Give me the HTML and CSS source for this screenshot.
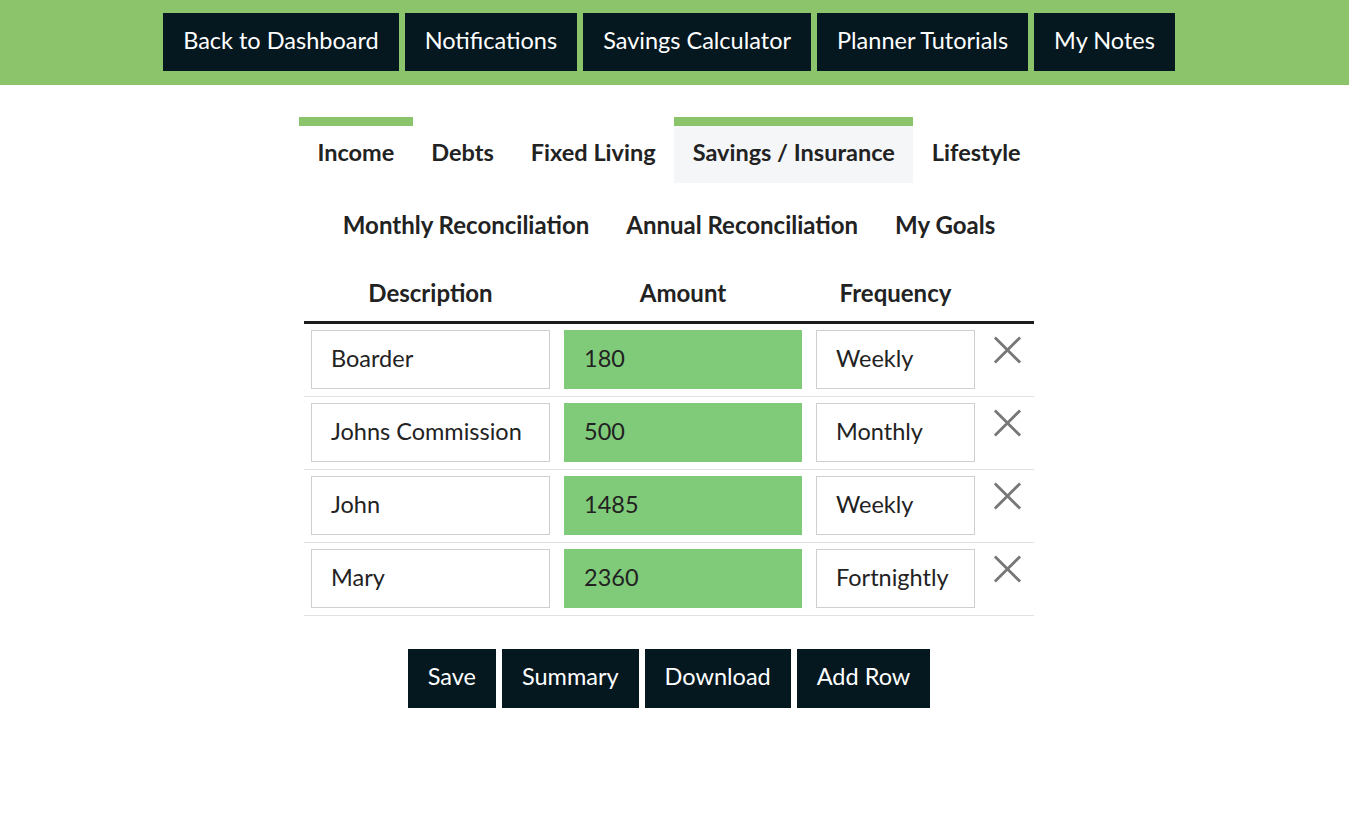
FILE: index.html
```html
<!DOCTYPE html>
<html lang="en">
<head>
<meta charset="utf-8">
<title>Budget Planner</title>
<link rel="stylesheet" href="styles.css">
</head>
<body>
<header class="topbar">
  <a class="nav-btn" href="#">Back to Dashboard</a>
  <a class="nav-btn" href="#">Notifications</a>
  <a class="nav-btn" href="#">Savings Calculator</a>
  <a class="nav-btn" href="#">Planner Tutorials</a>
  <a class="nav-btn" href="#">My Notes</a>
</header>
<main class="page">
  <nav class="tabs tabs-first">
    <a class="tab tab-done" href="#">Income</a>
    <a class="tab" href="#">Debts</a>
    <a class="tab" href="#">Fixed Living</a>
    <a class="tab tab-done tab-current" href="#">Savings / Insurance</a>
    <a class="tab" href="#">Lifestyle</a>
  </nav>
  <nav class="tabs tabs-second">
    <a class="tab" href="#">Monthly Reconciliation</a>
    <a class="tab" href="#">Annual Reconciliation</a>
    <a class="tab" href="#">My Goals</a>
  </nav>
  <table class="grid">
    <colgroup>
      <col class="c-desc"><col class="c-amt"><col class="c-freq"><col class="c-del">
    </colgroup>
    <thead>
      <tr><th>Description</th><th>Amount</th><th>Frequency</th><th></th></tr>
    </thead>
    <tbody>
      <tr>
        <td><div class="field">Boarder</div></td>
        <td><div class="field field-amt">180</div></td>
        <td><div class="field">Weekly</div></td>
        <td class="del"><svg class="x" viewBox="0 0 30 30"><path d="M1.5 1.5L28.5 28.5M28.5 1.5L1.5 28.5"/></svg></td>
      </tr>
      <tr>
        <td><div class="field">Johns Commission</div></td>
        <td><div class="field field-amt">500</div></td>
        <td><div class="field">Monthly</div></td>
        <td class="del"><svg class="x" viewBox="0 0 30 30"><path d="M1.5 1.5L28.5 28.5M28.5 1.5L1.5 28.5"/></svg></td>
      </tr>
      <tr>
        <td><div class="field">John</div></td>
        <td><div class="field field-amt">1485</div></td>
        <td><div class="field">Weekly</div></td>
        <td class="del"><svg class="x" viewBox="0 0 30 30"><path d="M1.5 1.5L28.5 28.5M28.5 1.5L1.5 28.5"/></svg></td>
      </tr>
      <tr>
        <td><div class="field">Mary</div></td>
        <td><div class="field field-amt">2360</div></td>
        <td><div class="field">Fortnightly</div></td>
        <td class="del"><svg class="x" viewBox="0 0 30 30"><path d="M1.5 1.5L28.5 28.5M28.5 1.5L1.5 28.5"/></svg></td>
      </tr>
    </tbody>
  </table>
  <div class="actions">
    <a class="nav-btn act-btn" href="#">Save</a>
    <a class="nav-btn act-btn" href="#">Summary</a>
    <a class="nav-btn act-btn" href="#">Download</a>
    <a class="nav-btn act-btn" href="#">Add Row</a>
  </div>
</main>
</body>
</html>
```

FILE: styles.css
```css
* { box-sizing: border-box; }

body {
  margin: 0;
  font-family: Lato, "Open Sans", sans-serif;
  color: #222;
  background: #fff;
}

a { text-decoration: none; }

.topbar {
  background: #8bc46a;
  display: flex;
  justify-content: center;
  gap: 6px;
  padding: 13px 11px 14px 0;
}

.nav-btn {
  display: flex;
  align-items: center;
  height: 58px;
  padding: 0 20px 5px;
  background: #051820;
  color: #fff;
  font-size: 23.5px;
}

.page {
  padding-right: 11px;
  display: flex;
  flex-direction: column;
  align-items: center;
}

.tabs {
  display: flex;
  justify-content: center;
}

.tabs-first { margin-top: 32px; }
.tabs-second { margin-top: 6px; }

.tab {
  display: flex;
  align-items: center;
  height: 66px;
  padding: 0 18.5px 5px;
  border-top: 9px solid transparent;
  color: #222;
  font-weight: 700;
  font-size: 24px;
}

.tabs-first .tab { font-size: 23.5px; }

.tab-done { border-top-color: #8bc46a; }
.tab-current { background: #f5f6f8; }

.grid {
  margin-top: 9px;
  width: 730px;
  border-collapse: collapse;
  table-layout: fixed;
}

.c-desc { width: 253px; }
.c-amt { width: 252px; }
.c-freq { width: 173px; }
.c-del { width: 52px; }

.grid th {
  height: 58px;
  font-size: 24px;
  font-weight: 700;
  text-align: center;
  border-bottom: 3px solid #1c1c1c;
  padding: 0;
}

.grid td {
  padding: 6px 7px 7px;
  border-bottom: 1px solid #e2e2e2;
}

.field {
  height: 59px;
  border: 1px solid #cfcfcf;
  padding: 0 19px 2px;
  display: flex;
  align-items: center;
  font-size: 23.5px;
  color: #222;
  background: #fff;
  white-space: nowrap;
}

.field-amt {
  background: #80cb79;
  border-color: #80cb79;
}

.grid td.del {
  vertical-align: top;
  padding: 12px 7px 0 11px;
}

.x {
  display: block;
  width: 29px;
  height: 28px;
  fill: none;
  stroke: #777;
  stroke-width: 3;
}

.actions {
  margin-top: 33px;
  display: flex;
  gap: 6px;
}

.act-btn {
  height: 59px;
  font-size: 23.5px;
}
```
